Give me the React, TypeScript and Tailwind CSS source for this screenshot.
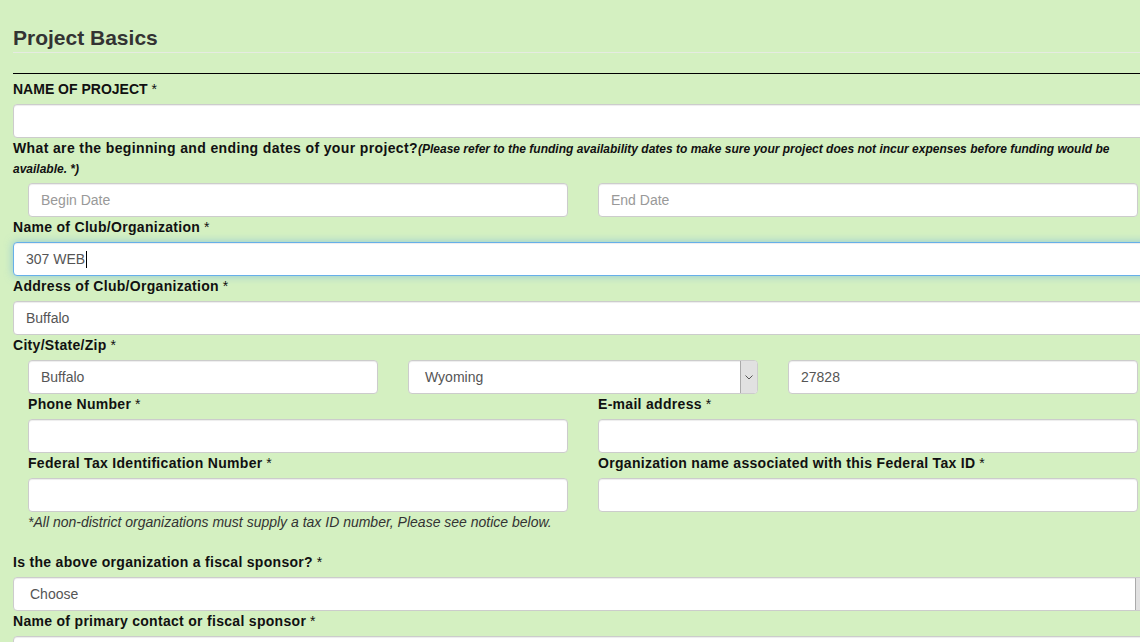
const inputBase =
  "block h-[34px] w-full rounded-[4px] border border-[#ccc] bg-white px-[12px] text-[14px] leading-[20px] text-[#555] shadow-[inset_0_1px_1px_rgba(0,0,0,0.075)]";

function Label({ text, children }: { text?: string; children?: React.ReactNode }) {
  return (
    <div className="mb-[5px] text-[14px] font-bold leading-[20px] tracking-[0.3px] text-[#111]">
      {text}
      {children}
      <span className="font-normal tracking-normal"> *</span>
    </div>
  );
}

function Input({ value, placeholder }: { value?: string; placeholder?: string }) {
  return (
    <div className={`${inputBase} flex items-center`}>
      {value ? <span>{value}</span> : <span className="text-[#999]">{placeholder}</span>}
    </div>
  );
}

function Select({ value }: { value: string }) {
  return (
    <div className="flex h-[34px] w-full items-stretch overflow-hidden rounded-[4px] border border-[#ccc] bg-white text-[14px] text-[#555] shadow-[inset_0_1px_1px_rgba(0,0,0,0.075)]">
      <div className="flex flex-1 items-center pl-[16px]">{value}</div>
      <div className="flex w-[17px] items-center justify-center border-l border-[#aaa] bg-[#e1e1e1]">
        <svg width="8" height="5" viewBox="0 0 8 5" fill="none">
          <path d="M0.5 0.5 L4 4 L7.5 0.5" stroke="#555" strokeWidth="1" />
        </svg>
      </div>
    </div>
  );
}

export default function App() {
  return (
    <div className="min-h-screen w-full overflow-hidden bg-[#d4f0c1] font-['Liberation_Sans',Arial,sans-serif]">
      <div className="ml-[13px] w-[1140px]">
        <h3 className="border-b border-[#e6ebe2] pb-[3px] pt-[26px] text-[21px] font-bold leading-[23px] text-[#333]">
          Project Basics
        </h3>
        <div className="mt-[20px] border-t border-black" />
        <div className="h-[5px]" />

        <div className="mb-[5px] text-[14px] font-bold leading-[20px] text-[#111]">
          NAME OF PROJECT<span className="font-normal"> *</span>
        </div>
        <Input />

        <div className="mb-[5px] text-[14px] font-bold leading-[20px] text-[#111]">
          <span className="tracking-[0.37px]">What are the beginning and ending dates of your project?</span>
          <span className="text-[12px] italic leading-[14px]">
            (Please refer to the funding availability dates to make sure your project does not incur expenses
            before funding would be available. *)
          </span>
        </div>
        <div className="grid grid-cols-2">
          <div className="px-[15px]">
            <Input placeholder="Begin Date" />
          </div>
          <div className="px-[15px]">
            <Input placeholder="End Date" />
          </div>
        </div>

        <Label text="Name of Club/Organization" />
        <div className="flex h-[34px] w-full items-center rounded-[4px] border border-[#66afe9] bg-white px-[12px] text-[14px] text-[#555] shadow-[inset_0_1px_1px_rgba(0,0,0,0.075),0_0_8px_rgba(102,175,233,0.6)]">
          <span>307 WEB</span>
          <span className="ml-[1px] h-[17px] w-[1px] bg-black" />
        </div>

        <Label text="Address of Club/Organization" />
        <Input value="Buffalo" />

        <Label text="City/State/Zip" />
        <div className="grid grid-cols-3">
          <div className="px-[15px]">
            <Input value="Buffalo" />
          </div>
          <div className="px-[15px]">
            <Select value="Wyoming" />
          </div>
          <div className="px-[15px]">
            <Input value="27828" />
          </div>
        </div>

        <div className="grid grid-cols-2">
          <div className="px-[15px]">
            <Label text="Phone Number" />
            <Input />
          </div>
          <div className="px-[15px]">
            <Label text="E-mail address" />
            <Input />
          </div>
          <div className="px-[15px]">
            <Label text="Federal Tax Identification Number" />
            <Input />
          </div>
          <div className="px-[15px]">
            <Label text="Organization name associated with this Federal Tax ID" />
            <Input />
          </div>
          <div className="col-span-2 px-[15px] text-[14px] italic leading-[20px] text-[#333]">
            *All non-district organizations must supply a tax ID number, Please see notice below.
          </div>
        </div>

        <div className="h-[20px]" />
        <Label text="Is the above organization a fiscal sponsor?" />
        <Select value="Choose" />

        <Label text="Name of primary contact or fiscal sponsor" />
        <Input />
      </div>
    </div>
  );
}
